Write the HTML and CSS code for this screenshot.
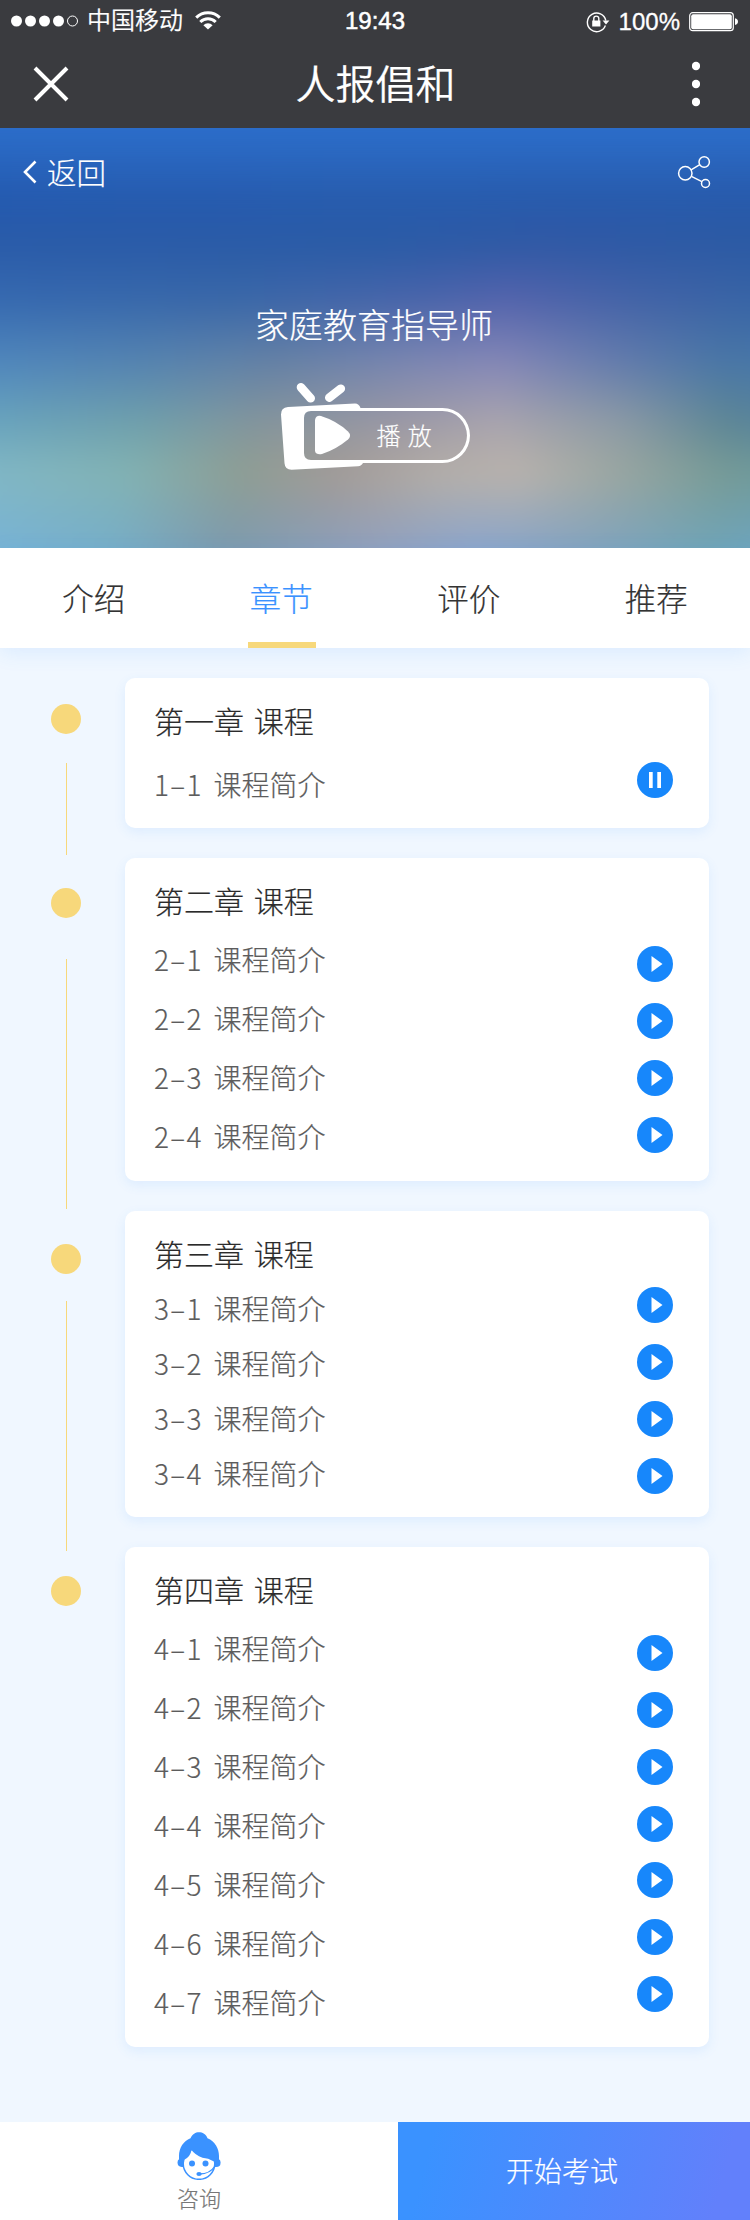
FILE: index.html
```html
<!DOCTYPE html>
<html lang="zh-CN">
<head>
<meta charset="utf-8">
<title>人报倡和</title>
<link rel="stylesheet" href="styles.css">
</head>
<body>
<svg width="0" height="0" class="defs">
  <symbol id="play" viewBox="0 0 36 36"><circle cx="18" cy="18" r="18" fill="#1787fb"/><path d="M14.5 10v16l11-8z" fill="#fff"/></symbol>
  <symbol id="pause" viewBox="0 0 36 36"><circle cx="18" cy="18" r="18" fill="#1787fb"/><path d="M12 10h3.7v16H12zM20.3 10H24v16h-3.7z" fill="#fff"/></symbol>
</svg>
<div class="page">
  <header class="top">
    <div class="status">
      <div class="carrier">
        <svg width="68" height="12" viewBox="0 0 68 12" fill="#fff"><circle cx="5.5" cy="6" r="5.5"/><circle cx="19.5" cy="6" r="5.5"/><circle cx="33.5" cy="6" r="5.5"/><circle cx="47.5" cy="6" r="5.5"/><circle cx="61.5" cy="6" r="5" fill="none" stroke="#fff"/></svg>
        <span class="operator">中国移动</span>
        <svg class="wifi" width="26" height="19" viewBox="0 0 26 19" fill="none" stroke="#fff" stroke-width="3"><path d="M1.2 6.6a17 17 0 0 1 23.6 0"/><path d="M5.3 11a11 11 0 0 1 15.4 0"/><path d="M13 18.5l-4.6-4.3a6.6 6.6 0 0 1 9.2 0z" fill="#fff" stroke="none"/></svg>
      </div>
      <span class="clock">19:43</span>
      <div class="power">
        <svg width="24" height="22" viewBox="0 0 24 22" fill="none" stroke="#fff" stroke-width="1.4"><path d="M19.4 14.6A9.3 9.3 0 1 1 19.8 9.5"/><path d="M16.6 9.6h6.8L20 13.6z" fill="#fff" stroke="none"/><path d="M6.2 9.5h8.2v6H6.2z" fill="#fff" stroke="none"/><path d="M7.8 10V7.6a2.5 2.5 0 0 1 5 0V10"/></svg>
        <span class="percent">100%</span>
        <svg width="50" height="20" viewBox="0 0 50 20"><rect x=".7" y=".7" width="43.6" height="18" rx="3" fill="none" stroke="#fff" stroke-width="1.2"/><rect x="2.2" y="2.2" width="40.6" height="15" rx="2" fill="#fff"/><path d="M46 6.3c4 1 4 5.8 0 6.8z" fill="#fff"/></svg>
      </div>
    </div>
    <div class="navbar">
      <svg class="close" width="36" height="36" viewBox="0 0 36 36" stroke="#fff" stroke-width="4"><path d="M2 2l32 32M34 2L2 34"/></svg>
      <h1 class="app-title">人报倡和</h1>
      <svg class="more" width="8" height="46" viewBox="0 0 8 46" fill="#fff"><circle cx="4" cy="5" r="4.2"/><circle cx="4" cy="23" r="4.2"/><circle cx="4" cy="41" r="4.2"/></svg>
    </div>
  </header>

  <section class="hero">
    <div class="backdrop"><div class="tint t1"></div><div class="tint t2"></div><div class="tint t3"></div><div class="tint t4"></div><div class="tint t5"></div><div class="tint t6"></div><div class="tint t7"></div></div>
    <div class="hero-bar">
      <a class="back"><svg width="14" height="24" viewBox="0 0 14 24" fill="none" stroke="#fff" stroke-width="2.6"><path d="M12.5 1.5L2 12l10.500 10.500"/></svg><span>返回</span></a>
      <svg class="share" width="34" height="34" viewBox="0 0 34 34" fill="none" stroke="#fff" stroke-width="1.5"><circle cx="8.300" cy="18.300" r="6.700"/><circle cx="27.200" cy="7" r="5.200"/><circle cx="28.500" cy="28.500" r="4"/><path d="M14.100 14.800l8.700-5.100M14.400 21.300l10.500 5.300"/></svg>
    </div>
    <h2 class="course">家庭教育指导师</h2>
    <button class="watch">
      <svg width="192" height="90" viewBox="280 382 192 90"><path d="M301 387.300l9.700 11M340.800 388.700l-11.500 9" stroke="#fff" stroke-width="8.600" stroke-linecap="round"/>
        <path fill="#fff" fill-rule="evenodd" d="M288 407l67-3.500q4 0 5.500 4.500H442.500a27.500 27.500 0 0 1 0 55H363q-1.500 3-5 3.200L291.500 469.700q-6.500 0-7-6.500L281 414.500q-.2-7 7-7.500zM311 411q-7 0-7 7v35q0 7 7 7H442.500a24.500 24.500 0 0 0 0-49z"/>
        <path fill="#fff" d="M315 451V420q1-5 6-4 16 5 27 15.500 4 4 0 8-12 10-26 14.500-6 1-7-3z"/></svg>
      <span class="watch-label">播 放</span>
    </button>
  </section>

  <nav class="tabs">
    <a class="tab">介绍</a><a class="tab active">章节</a><a class="tab">评价</a><a class="tab">推荐</a>
  </nav>

  <main class="body">
    <div class="timeline">
      <i class="dot"></i><i class="line l1"></i><i class="dot"></i><i class="line l2"></i><i class="dot"></i><i class="line l3"></i><i class="dot"></i>
    </div>
    <div class="chapters">
      <section class="card c1">
        <h3>第一章 课程</h3>
        <ul class="lessons"><li><b>1–1</b>课程简介</li></ul>
        <div class="actions"><svg><use href="#pause"/></svg></div>
      </section>
      <section class="card c2">
        <h3>第二章 课程</h3>
        <ul class="lessons"><li><b>2–1</b>课程简介</li><li><b>2–2</b>课程简介</li><li><b>2–3</b>课程简介</li><li><b>2–4</b>课程简介</li></ul>
        <div class="actions"><svg><use href="#play"/></svg><svg><use href="#play"/></svg><svg><use href="#play"/></svg><svg><use href="#play"/></svg></div>
      </section>
      <section class="card c3">
        <h3>第三章 课程</h3>
        <ul class="lessons"><li><b>3–1</b>课程简介</li><li><b>3–2</b>课程简介</li><li><b>3–3</b>课程简介</li><li><b>3–4</b>课程简介</li></ul>
        <div class="actions"><svg><use href="#play"/></svg><svg><use href="#play"/></svg><svg><use href="#play"/></svg><svg><use href="#play"/></svg></div>
      </section>
      <section class="card c4">
        <h3>第四章 课程</h3>
        <ul class="lessons"><li><b>4–1</b>课程简介</li><li><b>4–2</b>课程简介</li><li><b>4–3</b>课程简介</li><li><b>4–4</b>课程简介</li><li><b>4–5</b>课程简介</li><li><b>4–6</b>课程简介</li><li><b>4–7</b>课程简介</li></ul>
        <div class="actions"><svg><use href="#play"/></svg><svg><use href="#play"/></svg><svg><use href="#play"/></svg><svg><use href="#play"/></svg><svg><use href="#play"/></svg><svg><use href="#play"/></svg><svg><use href="#play"/></svg></div>
      </section>
    </div>
  </main>

  <footer class="bottom">
    <a class="ask">
      <svg width="44" height="48" viewBox="0 0 44 48"><circle cx="22" cy="31.500" r="15.800" fill="#fff" stroke="#3a92ff" stroke-width="1.500"/><path fill="#3a92ff" d="M13.500 6.300C15.500 2 18.500.2 22 .2s7 1.800 8.500 6.100C38 9.500 42 16.500 42 24v3.200q1.600 1 1.600 3.200 0 4.600-4.600 4.600h-1.200L37 29.500Q31 26 25.500 25.700 18 23 14.500 18q-1 6.500-7.200 9.800L6.500 35H4.800Q.5 34.500.5 30.500.5 28.300 2 27.200V24C2 16 6.500 9 13.500 6.300z"/><circle cx="15" cy="31.500" r="3" fill="#3a92ff"/><circle cx="28.500" cy="31.500" r="3" fill="#3a92ff"/><path d="M38 34q-5 8-15.500 8" fill="none" stroke="#3a92ff" stroke-width="1.300"/><ellipse cx="22" cy="42" rx="2.600" ry="1.900" fill="#3a92ff"/></svg>
      <span>咨询</span>
    </a>
    <a class="exam">开始考试</a>
  </footer>
</div>
</body>
</html>
```
FILE: styles.css
```css
* { box-sizing: border-box; margin: 0; padding: 0; }
body { font-family: "Noto Sans CJK SC Light", "Noto Sans CJK SC", sans-serif; font-weight: 300; color: #333; -webkit-text-stroke: .2px currentColor; }
h1, h2, h3, b { font-weight: inherit; }
ul { list-style: none; }
i { font-style: normal; }
svg { display: block; flex: none; }
.defs { position: absolute; }
.page { width: 750px; height: 2220px; display: flex; flex-direction: column; background: #f0f7ff; overflow: hidden; }

.top { height: 128px; background: #3a3b3f; color: #fff; }
.status { height: 41px; display: grid; grid-template-columns: 1fr auto 1fr; align-items: center; padding: 0 11px 0 11px; }
.carrier, .power { display: flex; align-items: center; }
.operator { font-family: "Noto Sans CJK SC DemiLight", "Noto Sans CJK SC", sans-serif; font-size: 24px; line-height: 36px; margin: -3px 0 0 8px; font-weight: 350; }
.wifi { margin-left: 12px; }
.clock { font: 24px "Liberation Sans", Arial, sans-serif; -webkit-text-stroke: .5px #fff; }
.power { justify-content: flex-end; gap: 9px; padding-top: 2px; }
.percent { font: 24px "Liberation Sans", Arial, sans-serif; -webkit-text-stroke: .3px #fff; }
.navbar { height: 87px; display: flex; align-items: flex-start; padding: 20px 50px 0 33px; }
.close { margin-top: 5px; }
.app-title { flex: 1; text-align: center; font-family: "Noto Sans CJK SC DemiLight", "Noto Sans CJK SC", sans-serif; font-weight: 350; font-size: 40px; line-height: 42px; margin-left: -14px; margin-right: -28px; }
.more { margin-left: 24px; }

.hero { position: relative; height: 420px; overflow: hidden; display: flex; flex-direction: column; align-items: center; color: #fff; background: #2c6ecb; }
.hero > * { position: relative; }
.hero .backdrop { position: absolute; inset: 0 -40px -40px; filter: blur(14px); }
.tint { position: absolute; inset: 0; }
.t1 { background: linear-gradient(90deg, #245aaf, #285cad 50%, #285aab); mask-image: linear-gradient(transparent 0, #000 70px); }
.t2 { background: linear-gradient(90deg, #2a5ba9, #2a5ba6 50%, #3059a5 70%, #2b5aa4); mask-image: linear-gradient(transparent 70px, #000 115px); }
.t3 { background: linear-gradient(90deg, #3569b1, #3967a8 33%, #4864aa 55%, #5363ac 66%, #4263a7 82%, #3564a5); mask-image: linear-gradient(transparent 115px, #000 170px); }
.t4 { background: linear-gradient(90deg, #4f88bf, #5684b0 22%, #6682a5 38%, #7d87b2 55%, #8688b7 65%, #637cac 80%, #4a77a6 92%, #4877aa); mask-image: linear-gradient(transparent 170px, #000 235px); }
.t5 { background: linear-gradient(90deg, #68a5c1, #70a0ab 22%, #84959c 36%, #9b98a4 52%, #aaa5ae 65%, #8b9aa5 80%, #5f8795 92%, #56839d); mask-image: linear-gradient(transparent 235px, #000 295px); }
.t6 { background: linear-gradient(90deg, #82b9c9, #83b3b3 20%, #8f9e93 34%, #a39b96 45%, #b5afa8 58%, #bab3ac 67%, #99a6a0 80%, #779b96 92%, #6d9a9c); mask-image: linear-gradient(transparent 295px, #000 345px); }
.t7 { background: linear-gradient(90deg, #78b4da, #76aec9 18%, #7c9aaf 32%, #90a0bf 50%, #89a4cd 62%, #82a3c0 75%, #70a5b8 90%, #6ca5c4); mask-image: linear-gradient(transparent 345px, #000 425px); }
.hero-bar { align-self: stretch; height: 90px; display: flex; justify-content: space-between; padding: 27px 39px 0 23px; }
.back { display: flex; height: 34px; align-items: center; gap: 10px; font-size: 29.5px; }
.back span { line-height: 34px; margin-top: -3px; }
.course { margin: 82px 2px 0 0; font-size: 34px; line-height: 48px; }
.watch { border: 0; background: none; color: #fff; margin: 34px 0 0 1px; width: 192px; height: 90px; font: inherit; font-size: 24px; line-height: 32px; display: grid; }
.watch > * { grid-area: 1 / 1; }
.watch-label { padding: 37px 0 0 97px; text-align: left; word-spacing: 2px; }

.tabs { position: relative; height: 100px; flex: none; display: flex; background: #fff; box-shadow: 0 4px 20px rgba(58, 146, 255, .12); }
.tab { flex: 1; height: 100px; font-size: 31.5px; line-height: 99px; display: flex; flex-direction: column; align-items: center; }
.tab.active { color: #3a92ff; }
.tab.active::after { content: ""; width: 68px; height: 6px; margin: -5px 0 0 1px; background: #f7d87b; }

.body { height: 1474px; flex: none; display: flex; padding: 30px 41px 0 51px; }
.timeline { width: 30px; margin-right: 44px; padding-top: 26px; display: flex; flex-direction: column; align-items: center; }
.dot { width: 30px; height: 30px; border-radius: 50%; background: #f7d87b; flex: none; }
.line { width: 1px; background: #f7d87b; flex: none; }
.l1 { height: 92px; margin: 29px 0 33px; }
.l2 { height: 250px; margin: 41px 0 35px; }
.l3 { height: 250px; margin: 27px 0 25px; }
.chapters { flex: 1; display: flex; flex-direction: column; gap: 30px; }
.card { --row: 59px; --text: 13px; --act: 28px; flex: none; border-radius: 10px; background: #fff; box-shadow: 0 4px 12px rgba(58, 146, 255, .1); padding: 22px 36px 0 29px; display: grid; grid-template: 42px 1fr / 1fr 36px; }
.card h3 { grid-column: 1 / 3; font-size: 30px; line-height: 40px; word-spacing: 3px; color: #2b2b2b; }
.lessons { margin-top: calc(var(--text) - 6px); font-size: 28px; color: #5c5c5c; }
.lessons li { height: var(--row); line-height: var(--row); white-space: nowrap; }
.lessons b { display: inline-block; width: 59.5px; letter-spacing: 1.3px; }
.actions { display: flex; flex-direction: column; gap: 21px; margin-top: var(--act); }
.actions svg { width: 36px; height: 36px; }
.c1 { height: 150px; --text: 19px; --act: 20px; }
.c2 { height: 323px; --text: 14px; --act: 24px; }
.c3 { height: 306px; --row: 55px; --text: 12px; --act: 12px; }
.c4 { height: 500px; --text: 14px; --act: 24px; }
.c4 .actions svg:nth-child(5) { margin-top: -1px; }

.bottom { height: 98px; flex: none; display: flex; background: #fff; }
.ask { width: 398px; display: flex; flex-direction: column; align-items: center; padding-top: 10px; color: #777; font-size: 22px; line-height: 32px; }
.ask span { margin-top: 1px; }
.exam { flex: 1; color: #fff; font-size: 28px; line-height: 96px; text-align: center; padding-right: 24px; background: linear-gradient(105deg, #3a92ff 10%, #6280fb 90%); }
```
